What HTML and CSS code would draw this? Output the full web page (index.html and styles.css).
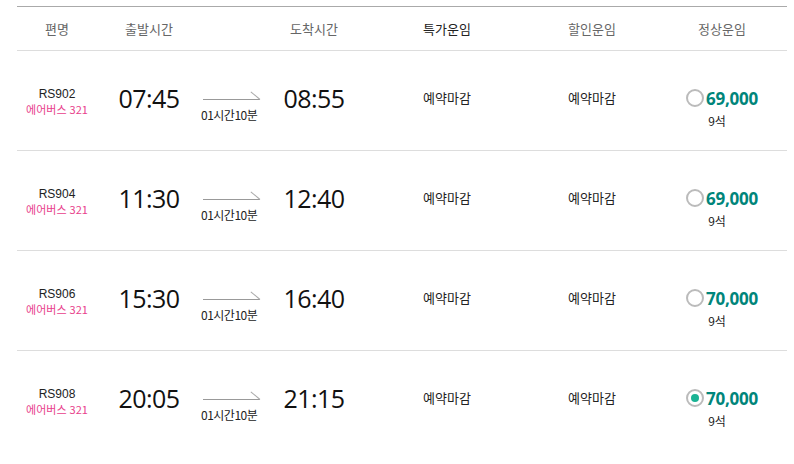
FILE: index.html
```html
<!DOCTYPE html>
<html lang="ko">
<head>
<meta charset="utf-8">
<link rel="stylesheet" href="styles.css">
</head>
<body>
<div class="table">
  <div class="row head">
    <div class="c">편명</div>
    <div class="c">출발시간</div>
    <div class="c"></div>
    <div class="c">도착시간</div>
    <div class="c strong">특가운임</div>
    <div class="c">할인운임</div>
    <div class="c">정상운임</div>
  </div>

  <div class="row">
    <div class="c flight"><span class="no">RS902</span><span class="type">에어버스 321</span></div>
    <div class="c time">07:45</div>
    <div class="c dur"><span class="arrow"></span><span class="dtext">01시간10분</span></div>
    <div class="c time">08:55</div>
    <div class="c closed">예약마감</div>
    <div class="c closed">예약마감</div>
    <div class="c fare"><span class="pr"><span class="radio"></span><span class="price">69,000</span></span><span class="seats">9석</span></div>
  </div>

  <div class="row">
    <div class="c flight"><span class="no">RS904</span><span class="type">에어버스 321</span></div>
    <div class="c time">11:30</div>
    <div class="c dur"><span class="arrow"></span><span class="dtext">01시간10분</span></div>
    <div class="c time">12:40</div>
    <div class="c closed">예약마감</div>
    <div class="c closed">예약마감</div>
    <div class="c fare"><span class="pr"><span class="radio"></span><span class="price">69,000</span></span><span class="seats">9석</span></div>
  </div>

  <div class="row">
    <div class="c flight"><span class="no">RS906</span><span class="type">에어버스 321</span></div>
    <div class="c time">15:30</div>
    <div class="c dur"><span class="arrow"></span><span class="dtext">01시간10분</span></div>
    <div class="c time">16:40</div>
    <div class="c closed">예약마감</div>
    <div class="c closed">예약마감</div>
    <div class="c fare"><span class="pr"><span class="radio"></span><span class="price">70,000</span></span><span class="seats">9석</span></div>
  </div>

  <div class="row last">
    <div class="c flight"><span class="no">RS908</span><span class="type">에어버스 321</span></div>
    <div class="c time">20:05</div>
    <div class="c dur"><span class="arrow"></span><span class="dtext">01시간10분</span></div>
    <div class="c time">21:15</div>
    <div class="c closed">예약마감</div>
    <div class="c closed">예약마감</div>
    <div class="c fare"><span class="pr"><span class="radio on"></span><span class="price">70,000</span></span><span class="seats">9석</span></div>
  </div>
</div>
</body>
</html>
```

FILE: styles.css
```css
html, body {
  margin: 0;
  padding: 0;
  background: #fff;
}
body {
  font-family: "Noto Sans CJK KR", "Noto Sans", sans-serif;
  color: #111;
  padding: 6px 7px 0 17px;
}
.table {
  width: 770px;
  border-top: 1px solid #aaa;
}
.row {
  display: grid;
  grid-template-columns: 80px 104px 60px 106px 160px 130px 130px;
  height: 99px;
  border-bottom: 1px solid #ddd;
  align-items: center;
}
.row.last { border-bottom: none; }
.row.head {
  height: 43px;
  font-size: 13px;
  color: #666;
}
.row.head .strong { color: #222; }
.c {
  display: flex;
  flex-direction: column;
  align-items: center;
  justify-content: center;
  text-align: center;
}
.flight {
  line-height: 15px;
  padding-top: 2px;
}
.flight .no {
  font-family: "Liberation Sans", "Noto Sans", sans-serif;
  font-size: 12px;
  color: #222;
}
.flight .type { font-size: 11px; color: #e83e8c; }
.time {
  font-family: "Open Sans", "Noto Sans", sans-serif;
  font-size: 25px;
  color: #111;
  padding-bottom: 6px;
  letter-spacing: -0.5px;
}
.dur {
  align-items: flex-start;
  padding-top: 20px;
}
.arrow {
  position: relative;
  display: block;
  width: 57px;
  height: 1px;
  background: #999;
  margin-left: 2px;
}
.arrow::after {
  content: "";
  position: absolute;
  right: 0;
  top: 0;
  width: 12px;
  height: 1px;
  background: #aaa;
  transform: rotate(40deg);
  transform-origin: right center;
}
.dtext {
  font-size: 12px;
  color: #222;
  margin-top: 6px;
  letter-spacing: -0.5px;
}
.closed {
  font-size: 13px;
  color: #222;
  padding-bottom: 6px;
}
.fare {
  padding-top: 14px;
}
.pr {
  display: flex;
  align-items: center;
  gap: 2px;
}
.radio {
  box-sizing: border-box;
  width: 18px;
  height: 18px;
  border: 2px solid #bbb;
  border-radius: 50%;
  display: flex;
  align-items: center;
  justify-content: center;
}
.radio.on::after {
  content: "";
  width: 8px;
  height: 8px;
  border-radius: 50%;
  background: #1ab394;
}
.price {
  font-family: "Open Sans", "Noto Sans", sans-serif;
  font-weight: 700;
  font-size: 17px;
  color: #00857a;
  letter-spacing: -0.2px;
}
.seats {
  font-size: 12px;
  color: #222;
  margin-top: 2px;
  margin-right: 10px;
}
```
